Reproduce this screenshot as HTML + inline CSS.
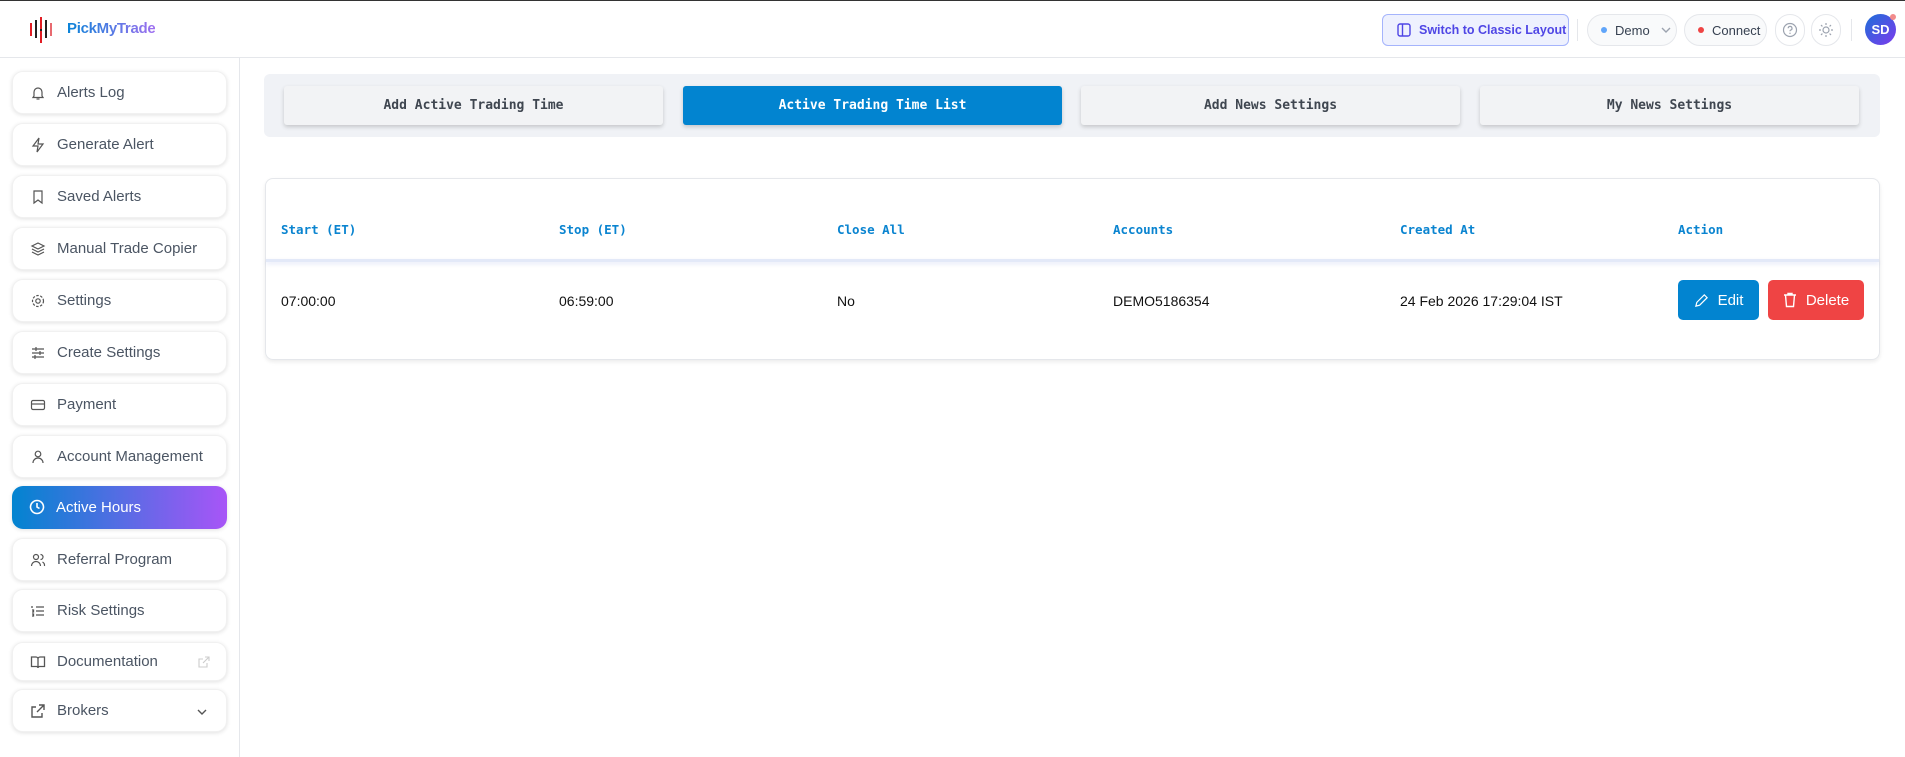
<!DOCTYPE html>
<html><head><meta charset="utf-8"><style>
*{box-sizing:border-box;margin:0;padding:0}
body{width:1905px;height:756px;overflow:hidden;background:#fff;font-family:"Liberation Sans",sans-serif;position:relative;border-top:1px solid #333}
.hdr{position:absolute;left:0;top:0;width:1905px;height:57px;border-bottom:1px solid #e5e7eb}
.logo{position:absolute;left:29px;top:16px}
.brand{position:absolute;left:67px;top:19px;font-weight:bold;font-size:15px;letter-spacing:-0.3px;background:linear-gradient(90deg,#0a84d8,#a070f0);-webkit-background-clip:text;color:transparent}
.pill{position:absolute;top:13px;height:32px;border:1px solid #e5e7eb;border-radius:16px;background:#f9fafb;font-size:13px;color:#374151;display:flex;align-items:center;white-space:nowrap}
.side{position:absolute;left:0;top:57px;width:240px;height:699px;border-right:1px solid #e5e7eb}
.item{position:absolute;left:12px;width:215px;height:43px;border-radius:11px;background:#fff;box-shadow:0 1px 4px rgba(0,0,0,.12);border:1px solid #f1f1f1;font-size:15px;color:#4b5563;display:flex;align-items:center;padding-left:44px}
.item svg{position:absolute;left:17px;top:13px}
.item.act{background:linear-gradient(90deg,#0284d0,#a855f7);color:#fff;border:none}
.tabs{position:absolute;left:264px;top:73px;width:1616px;height:63px;background:#f0f2f6;border-radius:6px}
.tab{position:absolute;top:12px;height:39px;width:379px;background:#f2f3f5;border-radius:3px;box-shadow:0 2px 4px rgba(0,0,0,.18);font-family:"DejaVu Sans Mono","Liberation Mono",monospace;font-weight:bold;font-size:13px;color:#3f4650;display:flex;align-items:center;justify-content:center}
.tab.on{background:#0284d0;color:#fff}
.card{position:absolute;left:265px;top:177px;width:1615px;height:182px;border:1px solid #e5e7eb;border-radius:8px;box-shadow:0 2px 4px rgba(0,0,0,.08)}
.th{position:absolute;top:43px;font-family:"DejaVu Sans Mono","Liberation Mono",monospace;font-weight:bold;font-size:12.5px;color:#0a84d0}
.td{position:absolute;top:114px;font-size:14px;color:#111}
.line{position:absolute;left:0;top:80px;width:1613px;height:3px;background:#e3e9f8;box-shadow:0 2px 4px rgba(120,140,220,.2)}
.btn{position:absolute;top:101px;height:40px;border-radius:5px;color:#fff;font-size:15px;display:flex;align-items:center;justify-content:center;gap:9px}
</style></head><body>
<div class="hdr">
<svg class="logo" width="24" height="26" viewBox="0 0 24 26"><rect x="1" y="6" width="2" height="13" fill="#e11d24"/><rect x="6" y="3" width="2" height="18" fill="#222"/><rect x="11" y="0" width="2" height="26" fill="#e11d24"/><rect x="11" y="12" width="2" height="2" fill="#222"/><rect x="16" y="3" width="2" height="18" fill="#222"/><rect x="21" y="6" width="2" height="13" fill="#e86a70"/></svg>
<div class="brand">PickMyTrade</div>
<div class="pill" style="left:1382px;width:187px;border-radius:6px;background:#eef1fe;border-color:#a5b4fc;color:#4f46e5;font-weight:bold;font-size:12.5px;padding-left:14px"><svg width="14" height="14" viewBox="0 0 14 14" style="margin-right:8px;flex:none"><rect x="1" y="1" width="12" height="12" rx="2" fill="none" stroke="#4f46e5" stroke-width="1.4"/><line x1="5.5" y1="1" x2="5.5" y2="13" stroke="#4f46e5" stroke-width="1.4"/></svg>Switch to Classic Layout</div>
<div style="position:absolute;left:1577px;top:18px;width:1px;height:22px;background:#e5e7eb"></div>
<div class="pill" style="left:1587px;width:90px;padding-left:13px"><span style="width:6px;height:6px;border-radius:3px;background:#60a5fa;margin-right:8px"></span>Demo<svg width="12" height="8" style="margin-left:10px" viewBox="0 0 12 8"><path d="M2 2l4 4 4-4" fill="none" stroke="#9ca3af" stroke-width="1.4"/></svg></div>
<div class="pill" style="left:1684px;width:83px;padding-left:13px"><span style="width:6px;height:6px;border-radius:3px;background:#ef4444;margin-right:8px"></span>Connect</div>
<div class="pill" style="left:1775px;width:30px;justify-content:center;background:#fff"><svg width="16" height="16" viewBox="0 0 16 16"><circle cx="8" cy="8" r="6.5" fill="none" stroke="#9ca3af" stroke-width="1.2"/><path d="M6.2 6.3a1.9 1.9 0 1 1 2.5 1.8c-.5.2-.7.6-.7 1.1" fill="none" stroke="#9ca3af" stroke-width="1.2"/><circle cx="8" cy="11.3" r=".7" fill="#9ca3af"/></svg></div>
<div class="pill" style="left:1811px;width:30px;justify-content:center;background:#fff"><svg width="16" height="16" viewBox="0 0 16 16" stroke="#9ca3af" stroke-width="1.2" fill="none"><circle cx="8" cy="8" r="3"/><path d="M8 1v2M8 13v2M1 8h2M13 8h2M3 3l1.4 1.4M11.6 11.6 13 13M3 13l1.4-1.4M11.6 4.4 13 3"/></svg></div>
<div style="position:absolute;left:1851px;top:18px;width:1px;height:22px;background:#e5e7eb"></div>
<div style="position:absolute;left:1865px;top:13px;width:31px;height:31px;border-radius:50%;background:linear-gradient(135deg,#1d6fd8,#7c3aed);color:#fff;font-weight:bold;font-size:13px;display:flex;align-items:center;justify-content:center">SD</div>
<div style="position:absolute;left:1890px;top:13px;width:6px;height:6px;border-radius:3px;background:#f28b8b"></div>
</div>
<div class="side">
<div class="item" style="top:13px"><svg width="16" height="16" viewBox="0 0 16 16" fill="none" stroke="#555" stroke-width="1.2"><path d="M4 11V7a4 4 0 0 1 8 0v4l1 1.5H3z"/><path d="M6.5 14h3"/></svg>Alerts Log</div>
<div class="item" style="top:65px"><svg width="16" height="16" viewBox="0 0 16 16" fill="none" stroke="#555" stroke-width="1.2"><path d="M9 1 3 9h5l-1 6 6-8H8z"/></svg>Generate Alert</div>
<div class="item" style="top:117px"><svg width="16" height="16" viewBox="0 0 16 16" fill="none" stroke="#555" stroke-width="1.2"><path d="M4 2h8v12l-4-3-4 3z"/></svg>Saved Alerts</div>
<div class="item" style="top:169px"><svg width="16" height="16" viewBox="0 0 16 16" fill="none" stroke="#555" stroke-width="1.2"><path d="M8 2 2 5l6 3 6-3zM2 8l6 3 6-3M2 11l6 3 6-3"/></svg>Manual Trade Copier</div>
<div class="item" style="top:221px"><svg width="16" height="16" viewBox="0 0 16 16" fill="none" stroke="#555" stroke-width="1.2"><circle cx="8" cy="8" r="2.2"/><circle cx="8" cy="8" r="5.5" stroke-dasharray="2.5 1.5"/></svg>Settings</div>
<div class="item" style="top:273px"><svg width="16" height="16" viewBox="0 0 16 16" fill="none" stroke="#555" stroke-width="1.2"><path d="M2 4h12M2 8h12M2 12h12M6 2v4M10 6v4M5 10v4"/></svg>Create Settings</div>
<div class="item" style="top:325px"><svg width="16" height="16" viewBox="0 0 16 16" fill="none" stroke="#555" stroke-width="1.2"><rect x="1.5" y="3.5" width="13" height="9" rx="1.5"/><path d="M1.5 7h13"/></svg>Payment</div>
<div class="item" style="top:377px"><svg width="16" height="16" viewBox="0 0 16 16" fill="none" stroke="#555" stroke-width="1.2"><circle cx="8" cy="5" r="2.8"/><path d="M3 14a5 5 0 0 1 10 0"/></svg>Account Management</div>
<div class="item act" style="top:428px"><svg width="16" height="16" viewBox="0 0 16 16" fill="none" stroke="#fff" stroke-width="1.6"><circle cx="8" cy="8" r="6.5"/><path d="M8 4v4l2.5 1.5"/></svg>Active Hours</div>
<div class="item" style="top:480px"><svg width="16" height="16" viewBox="0 0 16 16" fill="none" stroke="#555" stroke-width="1.2"><circle cx="6" cy="5" r="2.5"/><path d="M1.5 14a4.5 4.5 0 0 1 9 0M10.5 2.5a2.5 2.5 0 0 1 0 5M12.5 10a4 4 0 0 1 2 4"/></svg>Referral Program</div>
<div class="item" style="top:531px"><svg width="16" height="16" viewBox="0 0 16 16" fill="none" stroke="#555" stroke-width="1.3"><path d="M6 4h8M6 8h8M6 12h8M2 3v2M2 7h1.5v2H2M2 11h1.5v2H2"/></svg>Risk Settings</div>
<div class="item" style="top:584px;height:39px"><svg width="16" height="16" viewBox="0 0 16 16" fill="none" stroke="#555" stroke-width="1.3" style="top:11px"><path d="M1.5 3h4.5a2 2 0 0 1 2 2v9a1.5 1.5 0 0 0-1.5-1.5h-5zM14.5 3H10a2 2 0 0 0-2 2v9a1.5 1.5 0 0 1 1.5-1.5h5z"/></svg>Documentation<svg width="12" height="12" viewBox="0 0 12 12" fill="none" stroke="#ccc" stroke-width="1.1" style="left:185px;top:13px"><path d="M7 1h4v4M11 1 5 7M9 7v4H1V3h4"/></svg></div>
<div class="item" style="top:631px"><svg width="16" height="16" viewBox="0 0 16 16" fill="none" stroke="#555" stroke-width="1.4"><path d="M9 2h5v5M14 2 7 9M12 10v4H2V4h4"/></svg>Brokers<svg width="12" height="8" viewBox="0 0 12 8" style="left:183px;top:18px"><path d="M2 2l4 4 4-4" fill="none" stroke="#555" stroke-width="1.4"/></svg></div>
</div>
<div class="tabs">
<div class="tab" style="left:20px">Add Active Trading Time</div>
<div class="tab on" style="left:419px">Active Trading Time List</div>
<div class="tab" style="left:817px">Add News Settings</div>
<div class="tab" style="left:1216px">My News Settings</div>
</div>
<div class="card">
<div class="th" style="left:15px">Start (ET)</div>
<div class="th" style="left:293px">Stop (ET)</div>
<div class="th" style="left:571px">Close All</div>
<div class="th" style="left:847px">Accounts</div>
<div class="th" style="left:1134px">Created At</div>
<div class="th" style="left:1412px">Action</div>
<div class="line"></div>
<div class="td" style="left:15px">07:00:00</div>
<div class="td" style="left:293px">06:59:00</div>
<div class="td" style="left:571px">No</div>
<div class="td" style="left:847px">DEMO5186354</div>
<div class="td" style="left:1134px">24 Feb 2026 17:29:04 IST</div>
<div class="btn" style="left:1412px;width:81px;background:#0284d0"><svg width="15" height="15" viewBox="0 0 16 16" fill="none" stroke="#fff" stroke-width="1.3"><path d="M11 2l3 3-8 8-4 1 1-4z"/></svg>Edit</div>
<div class="btn" style="left:1502px;width:96px;background:#ef4444"><svg width="14" height="16" viewBox="0 0 14 16" fill="none" stroke="#fff" stroke-width="1.4"><path d="M1 3h12M5 3V1.5h4V3M2.5 3l1 11.5h7l1-11.5"/></svg>Delete</div>
</div>
</body></html>
